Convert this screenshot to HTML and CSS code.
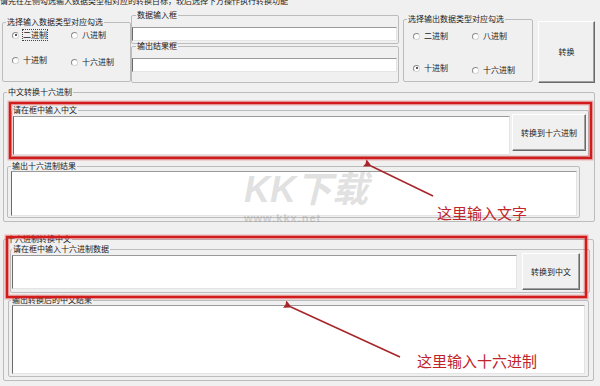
FILE: index.html
```html
<!DOCTYPE html>
<html lang="zh-CN">
  <head>
    <meta charset="UTF-8" />
    <meta name="viewport" content="width=device-width, initial-scale=1" />
    <title>进制转换</title>
    <link rel="stylesheet" href="styles.css">
  </head>
  <body>
    <div class="window">
      <p class="hint">请先在左侧勾选输入数据类型相对应的转换目标，较后选择下方操作执行转换功能</p>

      <div class="top-row">
        <fieldset class="group type-in">
          <legend>选择输入数据类型对应勾选</legend>
          <div class="radios">
            <label class="radio checked"><span class="dot"></span><span class="focus">二进制</span></label>
            <label class="radio"><span class="dot"></span>八进制</label>
            <label class="radio"><span class="dot"></span>十进制</label>
            <label class="radio low"><span class="dot"></span>十六进制</label>
          </div>
        </fieldset>

        <div class="io">
          <fieldset class="group io-box io-first">
            <legend>数据输入框</legend>
            <div class="textbox"></div>
          </fieldset>
          <fieldset class="group io-box io-second">
            <legend>输出结果框</legend>
            <div class="textbox"></div>
          </fieldset>
        </div>

        <fieldset class="group type-out">
          <legend>选择输出数据类型对应勾选</legend>
          <div class="radios">
            <label class="radio"><span class="dot"></span>二进制</label>
            <label class="radio"><span class="dot"></span>八进制</label>
            <label class="radio checked"><span class="dot"></span>十进制</label>
            <label class="radio low"><span class="dot"></span>十六进制</label>
          </div>
        </fieldset>

        <button class="btn convert">转换</button>
      </div>

      <!-- 中文 -> 十六进制 -->
      <fieldset class="group section cn">
        <legend>中文转换十六进制</legend>
        <fieldset class="group cn-input">
          <legend>请在框中输入中文</legend>
          <div class="row">
            <div class="textbox"></div>
            <button class="btn">转换到十六进制</button>
          </div>
        </fieldset>
        <fieldset class="group cn-output">
          <legend>输出十六进制结果</legend>
          <div class="body">
            <div class="textbox"></div>
          </div>
        </fieldset>
      </fieldset>

      <!-- 十六进制 -> 中文 -->
      <fieldset class="group section hex">
        <legend>十六进制转换中文</legend>
        <fieldset class="group hex-input">
          <legend>请在框中输入十六进制数据</legend>
          <div class="row">
            <div class="textbox"></div>
            <button class="btn">转换到中文</button>
          </div>
        </fieldset>
        <fieldset class="group hex-output">
          <legend>输出转换后的中文结果</legend>
          <div class="body">
            <div class="textbox"></div>
          </div>
        </fieldset>
      </fieldset>

      <div class="watermark">
        <span class="wm-logo">KK下载</span>
        <span class="wm-url">www.kkx.net</span>
      </div>

      <svg class="marks" width="600" height="386" viewBox="0 0 600 386">
        <defs>
          <marker id="head" markerWidth="8" markerHeight="8" refX="1" refY="4" orient="auto-start-reverse" markerUnits="userSpaceOnUse">
            <path d="M0 4 L8 0 L7 4 L8 8 Z" fill="#a8262a" />
          </marker>
        </defs>
        <rect x="10" y="103" width="581" height="55" fill="none" stroke="rgba(220,70,70,0.35)" stroke-width="5" />
        <rect x="10" y="103" width="581" height="55" fill="none" stroke="#d21c1c" stroke-width="2.4" />
        <rect x="7" y="237" width="579" height="60" fill="none" stroke="rgba(220,70,70,0.35)" stroke-width="5" />
        <rect x="7" y="237" width="579" height="60" fill="none" stroke="#d21c1c" stroke-width="2.4" />
        <line x1="433" y1="196" x2="371" y2="166" stroke="#a8262a" stroke-width="1.6" marker-end="url(#head)" />
        <line x1="400" y1="357" x2="291" y2="307" stroke="#a8262a" stroke-width="1.6" marker-end="url(#head)" />
      </svg>

      <div class="note note-text">这里输入文字</div>
      <div class="note note-hex">这里输入十六进制</div>
    </div>
  </body>
</html>
```

FILE: styles.css
```css
/* Classic WinForms look, scaled down */
* {
  box-sizing: border-box;
}
body {
  margin: 0;
  background: #f0f0f0;
  color: #1a1a1a;
  font-family: "Noto Sans CJK SC", "Noto Sans", sans-serif;
  font-size: 8px;
  line-height: 10px;
}
.window {
  position: relative;
  width: 600px;
  height: 386px;
  overflow: hidden;
}
.hint {
  margin: -4px 0 0 0;
  height: 10px;
  white-space: nowrap;
}

/* group boxes */
.group {
  margin: 0;
  padding: 0;
  min-width: 0;
  border: 1px solid #bcbcbc;
  border-radius: 2px;
}
.group legend {
  margin-left: 3px;
  padding: 0 1px;
  line-height: 10px;
}
.textbox {
  background: #fff;
  border-top: 1px solid #9a9a9a;
  border-left: 1px solid #6a6a6a;
  border-right: 1px solid #e4e4e4;
  border-bottom: 1px solid #e4e4e4;
}
.btn {
  font: inherit;
  color: #1a1a1a;
  background: #f0f0f0;
  border: 1px solid;
  border-color: #fff #6a6a6a #6a6a6a #fff;
  box-shadow: inset -1px -1px 0 #a0a0a0;
  padding: 0;
}

/* top row */
.top-row {
  display: flex;
  align-items: flex-start;
  height: 77px;
}
.type-in {
  margin: 11px 0 0 2px;
  width: 129px;
  height: 65px;
}
.type-out {
  margin: 8px 0 0 4px;
  width: 130px;
  height: 68px;
}
.radios {
  display: grid;
  grid-template-columns: 59px auto;
  padding: 3px 0 0 9px;
  row-gap: 15px;
}
.type-out .radios {
  padding-top: 7px;
  row-gap: 22px;
}
.radio {
  display: flex;
  align-items: center;
  gap: 4px;
  height: 10px;
  white-space: nowrap;
}
.radio.low {
  margin-top: 2px;
}
.dot {
  width: 7px;
  height: 7px;
  border-radius: 50%;
  border: 1px solid #8c8c8c;
  border-right-color: #d6d6d6;
  border-bottom-color: #d6d6d6;
  background: #fff;
  position: relative;
}
.checked .dot::after {
  content: "";
  position: absolute;
  left: 1.5px;
  top: 1.5px;
  width: 2px;
  height: 2px;
  border-radius: 50%;
  background: #222;
}
.focus {
  outline: 1px dotted #444;
  outline-offset: 0;
}
.io {
  width: 268px;
  margin-top: 4px;
}
.io-box {
  padding: 0 1px 0 0;
}
.io-box legend {
  margin-left: 4px;
}
.io-box .textbox {
  height: 14px;
  margin-top: 7px;
}
.io-first {
  height: 34px;
}
.io-second {
  height: 42px;
  margin-top: -3px;
}
.convert {
  margin: 15px 0 0 5px;
  width: 57px;
  height: 62px;
}

/* bottom sections */
.section {
  margin-left: 3px;
  padding-bottom: 3px;
}
.cn {
  margin-top: 4px;
  width: 592px;
}
.hex {
  margin-top: 12px;
  width: 591px;
}
.hex > legend {
  margin-left: 2px;
}
.row {
  display: flex;
  align-items: flex-start;
}
.row .btn {
  margin-top: -1px;
}
.row .textbox {
  margin-top: 1px;
}
.cn-input {
  margin: 8px 0 0 7px;
  width: 578px;
}
.cn-input legend {
  margin-left: 0;
}
.cn-input .row {
  gap: 2px;
  padding: 0 2px 1px 1px;
}
.cn-input .textbox {
  width: 497px;
  height: 39px;
}
.cn-input .btn {
  width: 74px;
  height: 37px;
}
.cn-output {
  margin: 4px 0 0 3px;
  width: 573px;
}
.cn-output .body {
  padding: 0 2px 1px 3px;
}
.cn-output .textbox {
  height: 45px;
}
.hex-input {
  margin-left: 6px;
  width: 580px;
}
.hex-input legend {
  margin-left: 1px;
}
.hex-input .row {
  gap: 5px;
  padding: 0 9px 2px 1px;
}
.hex-input .textbox {
  width: 505px;
  height: 34px;
}
.hex-input .btn {
  width: 58px;
  height: 37px;
}
.hex-output {
  margin: 2px 0 0 4px;
  width: 581px;
}
.hex-output legend {
  margin-left: 2px;
}
.hex-output .body {
  padding: 0 3px 2px 3px;
}
.hex-output .textbox {
  height: 69px;
}

/* overlays: watermark, red marks, notes */
.watermark {
  position: absolute;
  left: 244px;
  top: 168px;
  display: flex;
  flex-direction: column;
  color: rgba(150, 150, 150, 0.3);
  font-family: "Liberation Sans", "Noto Sans CJK SC", sans-serif;
  font-weight: 700;
}
.wm-logo {
  font-size: 36px;
  line-height: 44px;
  font-style: italic;
}
.wm-url {
  font-size: 11px;
  line-height: 12px;
  letter-spacing: 1px;
  color: rgba(150, 150, 150, 0.4);
}
.marks {
  position: absolute;
  left: 0;
  top: 0;
  pointer-events: none;
}
.note {
  position: absolute;
  color: #c0242a;
  font-size: 15px;
  line-height: 18px;
  white-space: nowrap;
}
.note-text {
  left: 437px;
  top: 204px;
}
.note-hex {
  left: 417px;
  top: 352px;
}
```
